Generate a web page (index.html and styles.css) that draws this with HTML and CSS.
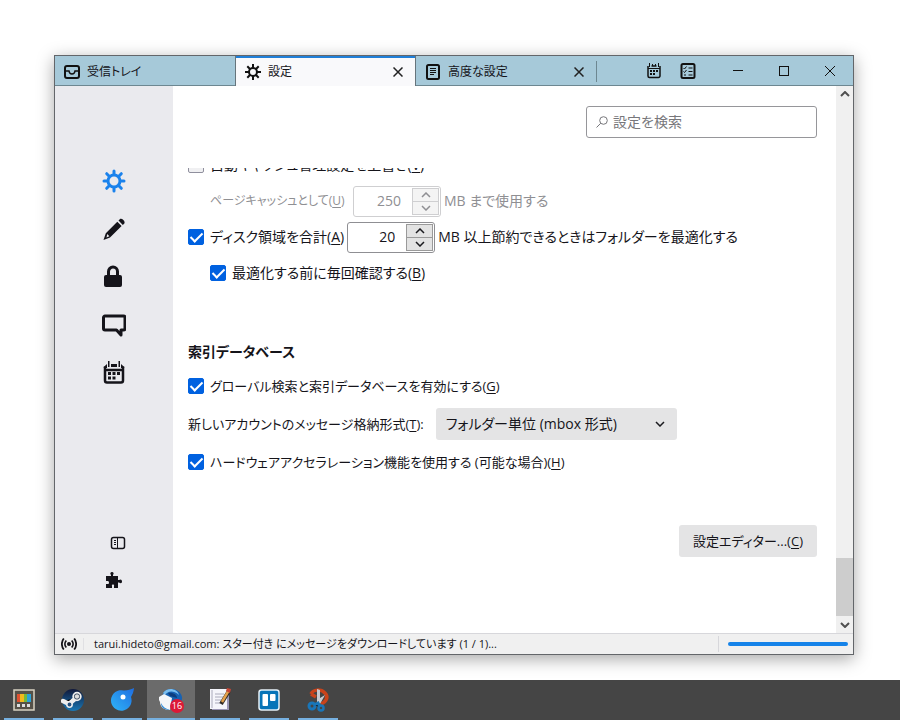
FILE: index.html
```html
<!DOCTYPE html>
<html lang="ja">
<head>
    <meta charset="UTF-8">
    <meta name="viewport" content="width=device-width, initial-scale=1.0">
    <title>設定</title>
    <link rel="stylesheet" href="styles.css">
</head>
<body>
    <div class="desktop">
        <div class="window">
            <header class="titlebar">
                <div class="tab">
                    <svg class="tab-icon" viewBox="0 0 16 16"><rect x="1" y="2" width="14" height="12" rx="2"/><path class="medium" d="M2 7h3c.5 4 5.500 4 6 0h3"/></svg>
                    <span class="tab-title">受信トレイ</span>
                </div>
                <div class="tab active">
                    <svg class="tab-icon" viewBox="0 0 16 16"><circle cx="8" cy="8" r="4"/><path d="M8 0v4M8 12v4M0 8h4M12 8h4M2.3 2.3l2.9 2.9M10.8 10.8l2.9 2.9M13.7 2.3l-2.9 2.9M5.2 10.8l-2.9 2.9"/></svg>
                    <span class="tab-title">設定</span>
                    <button class="tab-close" aria-label="タブを閉じる"><svg viewBox="0 0 10 10"><path d="M0.5 0.5l9 9M9.5 0.5l-9 9"/></svg></button>
                </div>
                <div class="tab last">
                    <svg class="tab-icon" viewBox="0 0 16 16"><rect x="2" y="1" width="12" height="14" rx="1.5"/><path class="thin" d="M5 4.5h6M5 6.5h6M5 8.5h6M5 10.5h4"/></svg>
                    <span class="tab-title">高度な設定</span>
                    <button class="tab-close" aria-label="タブを閉じる"><svg viewBox="0 0 10 10"><path d="M0.5 0.5l9 9M9.5 0.5l-9 9"/></svg></button>
                </div>
                <div class="tools">
                    <button aria-label="予定表">
                        <svg class="tool-icon" viewBox="0 0 16 16"><path class="medium" d="M2 3v10a1.500 1.500 0 0 0 1.500 1.500h9A1.500 1.500 0 0 0 14 13V3M5.500 3h5"/><path class="thin" d="M3.500 0v4M12.500 0v4M6.500 1v2M9.500 1v2M2 5.500h12"/><path class="fill" d="M4 7h2v2H4zM7 7h2v2H7zM10 7h2v2h-2zM4 10h2v2H4zM7 10h2v2H7z"/></svg>
                    </button>
                    <button aria-label="ToDo">
                        <svg class="tool-icon" viewBox="0 0 16 16"><rect x="1.500" y="1" width="13" height="14" rx="1.500"/><path class="thin" d="M3.500 5l1 1 2-2.500M3.500 8.500l1 1 2-2.500M8.500 5h4M8.500 8.500h4M8.500 12h4M4 12h2"/></svg>
                    </button>
                </div>
                <div class="window-buttons">
                    <button aria-label="最小化"><svg viewBox="0 0 10 10"><path d="M0 4.500h10"/></svg></button>
                    <button aria-label="最大化"><svg viewBox="0 0 10 10"><rect x="0.5" y="0.5" width="9" height="9"/></svg></button>
                    <button aria-label="閉じる"><svg viewBox="0 0 10 10"><path d="M0 0l10 10M10 0L0 10"/></svg></button>
                </div>
            </header>

            <div class="body">
                <nav class="sidebar">
                    <a href="#general" class="current" aria-label="一般">
                        <svg viewBox="0 0 24 24"><circle cx="12" cy="12" r="6" fill="none" stroke="currentColor" stroke-width="3"/><path fill="none" stroke="currentColor" stroke-width="3" stroke-linecap="round" d="M12 2v3M12 19v3M2 12h3M19 12h3M4.700 4.700l2.500 2.500M16.800 16.800l2.500 2.500M19.300 4.700l-2.500 2.500M7.200 16.800l-2.500 2.500"/></svg>
                    </a>
                    <a href="#compose" aria-label="編集">
                        <svg viewBox="0 0 24 24"><path fill="currentColor" d="M16.500 3.500l1.300-1.300c1.800-1.600 6.300 2.200 4.300 4.500l-1.300 1.200zM15.300 4.700l4.300 4.300L8 20.500 1.500 23l2.300-6.800z"/><path fill="#eaeaee" d="M5.200 17l2.200 2.200-2.900 1.300z"/></svg>
                    </a>
                    <a href="#privacy" aria-label="プライバシーとセキュリティ">
                        <svg viewBox="0 0 24 24"><path fill="none" stroke="currentColor" stroke-width="3" d="M6.500 12V6.500a4.500 4.500 0 0 1 9 0V12"/><rect x="2" y="10" width="18" height="12" rx="2" fill="currentColor"/></svg>
                    </a>
                    <a href="#chat" aria-label="チャット">
                        <svg viewBox="0 0 24 24"><path fill="none" stroke="currentColor" stroke-width="3" stroke-linejoin="round" d="M3 3h18.500a1.500 1.500 0 0 1 1.500 1.500v11a1.500 1.500 0 0 1-1.500 1.500H19v5l-4.500-5H3a1.500 1.500 0 0 1-1.500-1.500v-11A1.500 1.500 0 0 1 3 3z"/></svg>
                    </a>
                    <a href="#calendar" aria-label="カレンダー">
                        <svg viewBox="0 0 24 24"><path fill="none" stroke="currentColor" stroke-width="2.500" d="M3 5.500V19.500a2 2 0 0 0 2 2h14a2 2 0 0 0 2-2V5.500M3 9h18"/><path fill="currentColor" d="M9 3h6v3H9zM1.800 6L5 3v4H1.800zM22.200 6L19 3v4h3.200zM6 0h1.500v6H6zM16.500 0h1.500v6h-1.500zM6 11h3v3H6zM10.500 11h3v3h-3zM15 11h3v3h-3zM6 15.500h3v3H6zM10.500 15.500h3v3h-3z"/></svg>
                    </a>
                    <div class="sidebar-footer">
                        <a href="#accounts" class="small shifted" aria-label="アカウント設定">
                            <svg viewBox="0 0 16 16"><rect x="1.500" y="2.500" width="13" height="11" rx="2" fill="none" stroke="currentColor" stroke-width="1.500"/><path stroke="currentColor" d="M7.500 3v10.500M4 5.500h2M4 7.500h2M4 9.500h2"/></svg>
                        </a>
                        <a href="#addons" class="small" aria-label="アドオンとテーマ">
                            <svg viewBox="0 0 16 16"><path fill="currentColor" d="M0 4h5V3C3.500 1 5 0 6 0s2.500 1 1 3v1h5v4h1c2-1.500 3 0 3 1.500s-1 2.500-3 1H12V16H8v-2c1-2-3-2-2 0v2H0v-4h1.500c2 .6 2-3.600 0-3H0z"/></svg>
                        </a>
                    </div>
                </nav>

                <main class="content">
                    <div class="search-row">
                        <div class="search">
                            <svg viewBox="0 0 12 12"><circle cx="7.500" cy="4.500" r="3.800"/><path d="M4.800 7.200L0.500 11.500"/></svg>
                            <input type="search" aria-label="設定を検索" placeholder="設定を検索">
                        </div>
                    </div>
                    <div class="pane">
                        <div class="rows">
                            <div class="row">
                                <input type="checkbox" class="check" id="smartCache">
                                <label for="smartCache">自動キャッシュ管理設定を上書き(<u>V</u>)</label>
                            </div>
                            <div class="row indent disabled">
                                <label for="cacheSize" class="dense">ページキャッシュとして(<u>U</u>)</label>
                                <div class="number">
                                    <input type="number" id="cacheSize" value="250" disabled>
                                    <div class="spin">
                                        <button disabled aria-label="増やす"><svg viewBox="0 0 10 6"><path d="M1 5l4-4 4 4"/></svg></button>
                                        <button disabled aria-label="減らす"><svg viewBox="0 0 10 6"><path d="M1 1l4 4 4-4"/></svg></button>
                                    </div>
                                </div>
                                <span>MB まで使用する</span>
                            </div>
                            <div class="row">
                                <input type="checkbox" class="check" id="compact" checked>
                                <label for="compact">ディスク領域を合計(<u>A</u>)</label>
                                <div class="number">
                                    <input type="number" id="compactSize" aria-label="MB" value="20">
                                    <div class="spin">
                                        <button aria-label="増やす"><svg viewBox="0 0 10 6"><path d="M1 5l4-4 4 4"/></svg></button>
                                        <button aria-label="減らす"><svg viewBox="0 0 10 6"><path d="M1 1l4 4 4-4"/></svg></button>
                                    </div>
                                </div>
                                <span>MB 以上節約できるときはフォルダーを最適化する</span>
                            </div>
                            <div class="row indent">
                                <input type="checkbox" class="check" id="askCompact" checked>
                                <label for="askCompact">最適化する前に毎回確認する(<u>B</u>)</label>
                            </div>
                        </div>

                        <h2>索引データベース</h2>
                        <div class="rows roomy">
                            <div class="row">
                                <input type="checkbox" class="check" id="globalSearch" checked>
                                <label for="globalSearch">グローバル検索と索引データベースを有効にする(<u>G</u>)</label>
                            </div>
                            <div class="row">
                                <label for="storeType">新しいアカウントのメッセージ格納形式(<u>T</u>):</label>
                                <div class="select">
                                    <select id="storeType">
                                        <option>フォルダー単位 (mbox 形式)</option>
                                        <option>メッセージ単位 (maildir 形式)</option>
                                    </select>
                                    <svg viewBox="0 0 10 6"><path d="M1 1l4 4 4-4"/></svg>
                                </div>
                            </div>
                            <div class="row">
                                <input type="checkbox" class="check" id="hardware" checked>
                                <label for="hardware">ハードウェアアクセラレーション機能を使用する (可能な場合)(<u>H</u>)</label>
                            </div>
                        </div>
                        <div class="actions">
                            <button class="btn">設定エディター...(<u>C</u>)</button>
                        </div>
                    </div>
                </main>

                <div class="scrollbar">
                    <svg viewBox="0 0 10 6"><path d="M1 5l4-4 4 4"/></svg>
                    <div class="thumb"></div>
                    <svg viewBox="0 0 10 6"><path d="M1 1l4 4 4-4"/></svg>
                </div>
            </div>

            <footer class="statusbar">
                <div class="online">
                    <svg viewBox="0 0 16 12"><circle cx="8" cy="6" r="2" fill="currentColor"/><path fill="none" stroke="currentColor" stroke-width="1.800" d="M5.300 2.500c-1.800 2-1.800 5 0 7M10.700 2.500c1.800 2 1.800 5 0 7M2.800.5c-2.600 3.200-2.600 7.800 0 11M13.200.5c2.600 3.200 2.600 7.800 0 11"/></svg>
                </div>
                <div class="status-text">tarui.hideto@gmail.com: スター付き にメッセージをダウンロードしています (1 / 1)...</div>
                <div class="progress"><div class="progress-bar"></div></div>
            </footer>
        </div>
    </div>

    <div class="taskbar">
        <button class="task" aria-label="ツール">
            <svg viewBox="0 0 24 24"><rect x="2" y="2" width="20" height="20" fill="#555148" stroke="#d8d2c2" stroke-width="1.500"/><path fill="#e0512f" d="M5 6h4v8H5z"/><path fill="#f2b91d" d="M8 6h4v8H8z"/><path fill="#74b93c" d="M12 6h3v8h-3z"/><path fill="#2ba2d8" d="M15 6h4v8h-4z"/><path fill="#ddd" d="M5 16h3v3H5zM10 16h3v3h-3zM15 16h3v3h-3z"/></svg>
        </button>
        <button class="task" aria-label="Steam">
            <svg viewBox="0 0 24 24"><defs><linearGradient id="steam" x2="0" y2="1"><stop stop-color="#10183a"/><stop offset="1" stop-color="#1a78b5"/></linearGradient></defs><circle cx="12" cy="12" r="11" fill="url(#steam)"/><path stroke="#eee" stroke-width="4.500" stroke-linecap="round" d="M2 13l6 3 7-6"/><circle cx="16" cy="8.500" r="3.800" fill="#26374f" stroke="#eee" stroke-width="1.800"/><circle cx="16" cy="8.500" r="2.200" fill="#ddd"/><circle cx="8.500" cy="16.500" r="2.700" fill="#26507d" stroke="#eee" stroke-width="1.500"/></svg>
        </button>
        <button class="task" aria-label="ブラウザー">
            <svg viewBox="0 0 24 24"><defs><linearGradient id="drop" x1="1" x2="0" y2="1"><stop stop-color="#1f6de0"/><stop offset="1" stop-color="#2fb5f8"/></linearGradient></defs><path fill="url(#drop)" d="M24 0c-.5 5-2 7-3 9a10.300 10.300 0 1 1-7-6.500C18 2.500 21 1.500 24 0z"/><circle cx="13" cy="9" r="2.500" fill="#fff"/></svg>
        </button>
        <button class="task running" aria-label="Thunderbird">
            <svg viewBox="0 0 24 24"><path fill="#1762b3" d="M5 4C9-1 21 0 23 9c1 8-8 12-14 10C3 18 0 14 1 9l2-1z"/><path fill="#79bdee" d="M4 5C8-1 18 0 20 7 14 2 9 3 6 7z"/><path fill="#f3f5f8" d="M0 9l5-3 8 4-2 12C5 22 1 19 1 14l-1-2z"/><path fill="#0d3d7e" d="M9 5c5-1 9 2 9 5l-7-2z"/><path fill="#2d8ad8" d="M2 15c2 4 5 6 9 7-5 0-9-2-9-7z"/></svg>
            <span class="badge">16</span>
        </button>
        <button class="task" aria-label="メモ帳">
            <svg viewBox="0 0 24 24"><path fill="#9b96b5" d="M3 2h18v20H4z"/><path fill="#f5f5fb" d="M2 1h17v20H2z"/><path fill="none" stroke="#aab" d="M4 2v18M7 6h9M7 9h8M7 12h6M7 15h5"/><path stroke="#302b27" stroke-width="4" d="M13 16l8-13"/><path stroke="#e4a04b" stroke-width="2.500" d="M14 14l7-12"/><path fill="#c64636" d="M19 0l4 1-1 4-4-2z"/></svg>
        </button>
        <button class="task" aria-label="Trello">
            <svg viewBox="0 0 24 24"><rect x="2" y="2" width="20" height="20" rx="2.500" fill="#0774b8" stroke="#e6f1f8" stroke-width="1.500"/><rect x="5.500" y="6" width="5.500" height="12" rx="1" fill="#fff"/><rect x="13" y="6" width="5.500" height="7" rx="1" fill="#fff"/></svg>
        </button>
        <button class="task" aria-label="スクリーンショット">
            <svg viewBox="0 0 24 24"><path fill="none" stroke="#c9431b" stroke-width="3.500" d="M5 6c2-5 10-5 14-1s1 9-4 11M5 6l5 3"/><path fill="#c9cbd0" d="M11 1l3 1v8l5-3-5 9h-3z"/><circle cx="6" cy="18" r="3" fill="none" stroke="#1976b9" stroke-width="3"/><circle cx="15" cy="20" r="2.500" fill="none" stroke="#1976b9" stroke-width="2.500"/><path stroke="#1976b9" stroke-width="3" d="M8 17l4-2 2 4"/></svg>
        </button>
    </div>
</body>
</html>
```
FILE: styles.css
```css
* {
    box-sizing: border-box;
}

body {
    margin: 0;
    min-height: 100vh;
    display: flex;
    flex-direction: column;
    background: #fff;
    color: #15141a;
    font-family: "Open Sans", "Noto Sans CJK JP", sans-serif;
    font-feature-settings: "palt";
    font-size: 14px;
    line-height: 20px;
}

button,
input,
select {
    font: inherit;
    font-feature-settings: inherit;
    color: inherit;
    margin: 0;
}

button {
    border: 0;
    padding: 0;
    background: none;
}

svg {
    display: block;
    flex: none;
}

.desktop {
    flex: 1;
    display: flex;
    padding: 55px 46px 25px 54px;
}

.window {
    flex: 1;
    min-width: 0;
    display: flex;
    flex-direction: column;
    border: 1px solid #63666a;
    background: #fff;
    box-shadow: 0 4px 16px rgba(0, 0, 0, 0.35);
}

/* Title bar */
.titlebar {
    display: flex;
    height: 30px;
    background: #a6c9d9;
    font-size: 12px;
    line-height: 16px;
    box-shadow: inset 0 -1px #6d8791;
}

.tab {
    display: flex;
    align-items: center;
    flex: 0 1 180px;
    padding: 1px 12px 0 9px;
    gap: 7px;
}

.tab.active {
    flex-basis: 181px;
    background: #f9f9fb;
    border: solid #66747b;
    border-width: 0 1px;
    box-shadow: inset 0 2px #1f7fd8;
}

.tab.last {
    position: relative;
}

.tab.last::after {
    content: "";
    position: absolute;
    right: -1px;
    top: 5px;
    height: 21px;
    border-right: 1px solid #6d8791;
}

.tab-title {
    flex: 1;
    white-space: nowrap;
}

.tab-icon,
.tool-icon {
    width: 16px;
    height: 16px;
    fill: none;
    stroke: #111;
    stroke-width: 2;
}

.medium {
    stroke-width: 1.5;
}

.thin {
    stroke-width: 1;
}

.fill {
    fill: #111;
    stroke: none;
}

.tab-close svg {
    width: 10px;
    height: 10px;
    stroke: #222;
    stroke-width: 1.5;
}

.tools {
    display: flex;
    align-items: center;
    gap: 18px;
    margin-left: auto;
}

.window-buttons {
    display: flex;
    margin-left: 19px;
}

.window-buttons button {
    width: 46px;
    display: flex;
    align-items: center;
    justify-content: center;
}

.window-buttons svg {
    width: 10px;
    height: 10px;
    fill: none;
    stroke: #111;
}

/* Settings page */
.body {
    flex: 1;
    display: flex;
    min-height: 0;
}

.sidebar {
    width: 118px;
    display: flex;
    flex-direction: column;
    align-items: center;
    padding-top: 71px;
    background: #eaeaee;
}

.sidebar a {
    height: 48px;
    display: flex;
    align-items: center;
    color: #15141a;
}

.sidebar a.current {
    color: #1a82ec;
}

.sidebar svg {
    width: 24px;
    height: 24px;
}

.sidebar-footer {
    margin-top: auto;
    padding: 0 0 35px 4px;
}

.sidebar .small {
    height: 37px;
}

.sidebar .small svg {
    width: 16px;
    height: 16px;
}

.shifted {
    padding-left: 4px;
}

.content {
    flex: 1;
    min-width: 0;
    display: flex;
    flex-direction: column;
    padding: 20px 19px 0 15px;
}

.search-row {
    display: flex;
    justify-content: flex-end;
    padding-bottom: 30px;
}

.search {
    display: flex;
    align-items: center;
    gap: 5px;
    width: 231px;
    height: 32px;
    padding: 0 9px;
    border: 1px solid #96969a;
    border-radius: 3px;
}

.search svg {
    width: 12px;
    height: 12px;
    fill: none;
    stroke: #77777b;
}

.search input {
    flex: 1;
    min-width: 0;
    border: 0;
    padding: 0;
    background: none;
    outline: none;
}

.search input::placeholder {
    color: #77777b;
}

.pane {
    flex: 1;
    overflow: hidden;
    white-space: nowrap;
}

/* the pane is scrolled, so its first row is cut off */
.pane .rows:first-child {
    margin-top: -21px;
}

.row {
    display: flex;
    align-items: center;
    gap: 3px;
    height: 36px;
}

.roomy .row {
    height: 38px;
}

.roomy label,
.btn {
    font-size: 13px;
}

.dense {
    font-size: 12px;
    min-width: 140px;
}

.indent {
    padding-left: 22px;
}

.disabled {
    color: #8f8f93;
}

u {
    text-underline-offset: 2px;
}

.check {
    appearance: none;
    width: 16px;
    height: 16px;
    margin-right: 3px;
    border: 1px solid #8f8f9d;
    border-radius: 2px;
    background: #f0f0f2;
    position: relative;
}

.check:checked {
    border-color: #0061e0;
    background: #0061e0;
}

.check:checked::after {
    content: "";
    position: absolute;
    left: 4px;
    top: 0;
    width: 5px;
    height: 10px;
    border: solid #fff;
    border-width: 0 2px 2px 0;
    transform: rotate(45deg);
}

.number {
    display: flex;
    width: 88px;
    height: 31px;
    border: 1px solid #8f8f93;
    border-radius: 3px;
    background: #fff;
}

.number input {
    flex: 1;
    min-width: 0;
    padding: 0 10px 0 0;
    border: 0;
    background: none;
    text-align: right;
    appearance: textfield;
}

.number input::-webkit-inner-spin-button {
    appearance: none;
}

.spin {
    display: flex;
    flex-direction: column;
    width: 27px;
    margin: 1px;
    border: 1px solid #9a9a9a;
    background: #e3e3e3;
}

.spin button {
    flex: 1;
    display: flex;
    align-items: center;
    justify-content: center;
}

.spin button + button {
    border-top: 1px solid #9a9a9a;
}

.spin svg,
.select svg,
.scrollbar svg {
    width: 10px;
    height: 6px;
    fill: none;
    stroke: #1b1b1f;
    stroke-width: 1.5;
}

.disabled .number,
.disabled .spin,
.disabled .spin button {
    border-color: #cfcfd1;
}

.disabled .spin {
    background: #f4f4f4;
}

.disabled .spin svg {
    stroke: #8f8f93;
}

h2 {
    margin: 49px 0 3px;
    font-size: 14px;
    line-height: 24px;
}

.select {
    position: relative;
    width: 241px;
    margin-left: 9px;
}

.select select {
    appearance: none;
    width: 100%;
    height: 32px;
    padding: 0 30px 0 10px;
    border: 0;
    border-radius: 3px;
    background: #e4e4e5;
}

.select svg {
    position: absolute;
    right: 12px;
    top: 13px;
    pointer-events: none;
}

.actions {
    display: flex;
    justify-content: flex-end;
    padding-top: 44px;
}

.btn {
    height: 32px;
    padding: 0 14px;
    border-radius: 3px;
    background: #e4e4e5;
}

.scrollbar {
    width: 17px;
    display: flex;
    flex-direction: column;
    align-items: center;
    padding: 5px 0;
    background: #f0f0f0;
}

.scrollbar svg {
    stroke: #505050;
    stroke-width: 2;
}

.thumb {
    width: 17px;
    height: 58px;
    margin: auto 0 6px;
    background: #cdcdcd;
}

/* Status bar */
.statusbar {
    display: flex;
    align-items: center;
    height: 21px;
    background: #f0f0f0;
    border-top: 1px solid #d7d7db;
    font-size: 11px;
    line-height: 16px;
}

.online {
    width: 29px;
    padding-left: 6px;
    border-right: 1px solid #e0e0e3;
}

.online svg {
    width: 16px;
    height: 12px;
}

.status-text {
    flex: 1;
    padding-left: 10px;
    white-space: nowrap;
}

.progress {
    width: 135px;
    padding: 6px 5px 6px 9px;
    border-left: 1px solid #d7d7db;
}

.progress-bar {
    height: 4px;
    border-radius: 2px;
    background: #1583e9;
}

/* Taskbar */
.taskbar {
    display: flex;
    gap: 1px;
    height: 40px;
    background: #454545;
}

.task {
    position: relative;
    width: 48px;
    display: flex;
    justify-content: center;
    align-items: center;
}

.task svg {
    width: 24px;
    height: 24px;
}

.task::after {
    content: "";
    position: absolute;
    left: 4px;
    right: 4px;
    bottom: 0;
    height: 2px;
    background: #76b0e0;
}

.task.running {
    background: #6b6b6b;
}

.task.running::after {
    left: 0;
    right: 0;
}

.badge {
    position: absolute;
    left: 23px;
    top: 19px;
    width: 14px;
    height: 14px;
    border-radius: 50%;
    background: #dc1936;
    color: #fff;
    font-size: 9px;
    line-height: 14px;
}
```
